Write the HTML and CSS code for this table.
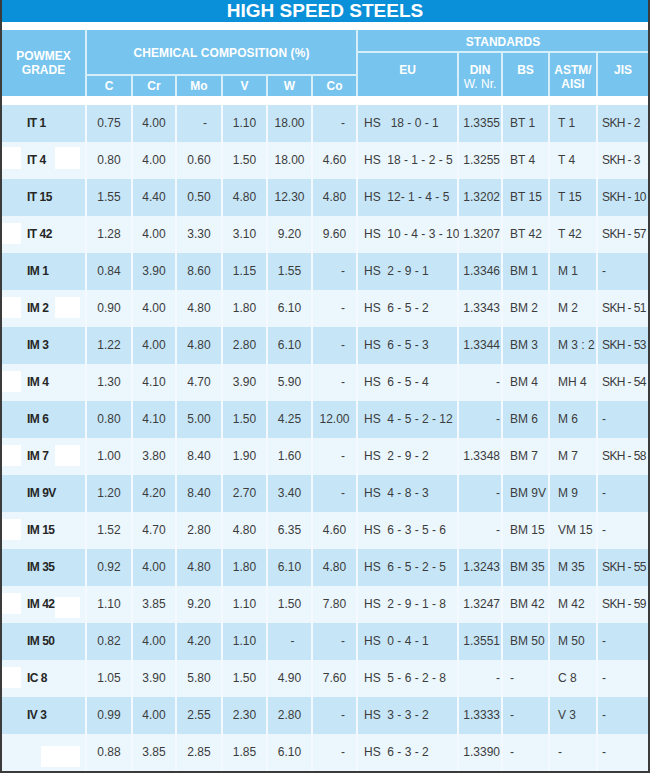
FILE: index.html
```html
<!DOCTYPE html>
<html lang="en">
<head>
<meta charset="utf-8">
<title>High Speed Steels</title>
<link rel="stylesheet" href="styles.css">
</head>
<body>
<div class="sheet">
  <div class="title">HIGH SPEED STEELS</div>
  <div class="head">
    <div class="h grade-h">POWMEX<br>GRADE</div>
    <div class="h chem-h">CHEMICAL COMPOSITION (%)</div>
    <div class="h std-h">STANDARDS</div>
    <div class="h sub c1">C</div>
    <div class="h sub c2">Cr</div>
    <div class="h sub c3">Mo</div>
    <div class="h sub c4">V</div>
    <div class="h sub c5">W</div>
    <div class="h sub c6">Co</div>
    <div class="h std s1">EU</div>
    <div class="h std s2">DIN<br><span class="thin">W. Nr.</span></div>
    <div class="h std s3">BS</div>
    <div class="h std s4">ASTM/<br>AISI</div>
    <div class="h std s5">JIS</div>
  </div>
  <div class="body">
    <div class="row odd"><div class="g">IT 1</div><div class="n">0.75</div><div class="n">4.00</div><div class="n dm">-</div><div class="n">1.10</div><div class="n">18.00</div><div class="n dc">-</div><div class="eu">HS   18 - 0 - 1</div><div class="din">1.3355</div><div class="l">BT 1</div><div class="l a">T 1</div><div class="l j">SKH - 2</div></div>
    <div class="row even"><div class="g">IT 4<span class="box lb b5"></span><span class="box rb b5"></span></div><div class="n">0.80</div><div class="n">4.00</div><div class="n">0.60</div><div class="n">1.50</div><div class="n">18.00</div><div class="n">4.60</div><div class="eu">HS  18 - 1 - 2 - 5</div><div class="din">1.3255</div><div class="l">BT 4</div><div class="l a">T 4</div><div class="l j">SKH - 3</div></div>
    <div class="row odd"><div class="g">IT 15</div><div class="n">1.55</div><div class="n">4.40</div><div class="n">0.50</div><div class="n">4.80</div><div class="n">12.30</div><div class="n">4.80</div><div class="eu">HS  12- 1 - 4 - 5</div><div class="din">1.3202</div><div class="l">BT 15</div><div class="l a">T 15</div><div class="l j">SKH - 10</div></div>
    <div class="row even"><div class="g">IT 42<span class="box lb"></span></div><div class="n">1.28</div><div class="n">4.00</div><div class="n">3.30</div><div class="n">3.10</div><div class="n">9.20</div><div class="n">9.60</div><div class="eu">HS  10 - 4 - 3 - 10</div><div class="din">1.3207</div><div class="l">BT 42</div><div class="l a">T 42</div><div class="l j">SKH - 57</div></div>
    <div class="row odd"><div class="g">IM 1</div><div class="n">0.84</div><div class="n">3.90</div><div class="n">8.60</div><div class="n">1.15</div><div class="n">1.55</div><div class="n dc">-</div><div class="eu">HS  2 - 9 - 1</div><div class="din">1.3346</div><div class="l">BM 1</div><div class="l a">M 1</div><div class="l j">-</div></div>
    <div class="row even"><div class="g">IM 2<span class="box lb"></span><span class="box rb"></span></div><div class="n">0.90</div><div class="n">4.00</div><div class="n">4.80</div><div class="n">1.80</div><div class="n">6.10</div><div class="n dc">-</div><div class="eu">HS  6 - 5 - 2</div><div class="din">1.3343</div><div class="l">BM 2</div><div class="l a">M 2</div><div class="l j">SKH - 51</div></div>
    <div class="row odd"><div class="g">IM 3</div><div class="n">1.22</div><div class="n">4.00</div><div class="n">4.80</div><div class="n">2.80</div><div class="n">6.10</div><div class="n dc">-</div><div class="eu">HS  6 - 5 - 3</div><div class="din">1.3344</div><div class="l">BM 3</div><div class="l a">M 3 : 2</div><div class="l j">SKH - 53</div></div>
    <div class="row even"><div class="g">IM 4<span class="box lb"></span></div><div class="n">1.30</div><div class="n">4.10</div><div class="n">4.70</div><div class="n">3.90</div><div class="n">5.90</div><div class="n dc">-</div><div class="eu">HS  6 - 5 - 4</div><div class="din">-</div><div class="l">BM 4</div><div class="l a">MH 4</div><div class="l j">SKH - 54</div></div>
    <div class="row odd"><div class="g">IM 6</div><div class="n">0.80</div><div class="n">4.10</div><div class="n">5.00</div><div class="n">1.50</div><div class="n">4.25</div><div class="n">12.00</div><div class="eu">HS  4 - 5 - 2 - 12</div><div class="din">-</div><div class="l">BM 6</div><div class="l a">M 6</div><div class="l j">-</div></div>
    <div class="row even"><div class="g">IM 7<span class="box lb"></span><span class="box rb"></span></div><div class="n">1.00</div><div class="n">3.80</div><div class="n">8.40</div><div class="n">1.90</div><div class="n">1.60</div><div class="n dc">-</div><div class="eu">HS  2 - 9 - 2</div><div class="din">1.3348</div><div class="l">BM 7</div><div class="l a">M 7</div><div class="l j">SKH - 58</div></div>
    <div class="row odd"><div class="g">IM 9V</div><div class="n">1.20</div><div class="n">4.20</div><div class="n">8.40</div><div class="n">2.70</div><div class="n">3.40</div><div class="n dc">-</div><div class="eu">HS  4 - 8 - 3</div><div class="din">-</div><div class="l">BM 9V</div><div class="l a">M 9</div><div class="l j">-</div></div>
    <div class="row even"><div class="g">IM 15<span class="box lb"></span></div><div class="n">1.52</div><div class="n">4.70</div><div class="n">2.80</div><div class="n">4.80</div><div class="n">6.35</div><div class="n">4.60</div><div class="eu">HS  6 - 3 - 5 - 6</div><div class="din">-</div><div class="l">BM 15</div><div class="l a">VM 15</div><div class="l j">-</div></div>
    <div class="row odd"><div class="g">IM 35</div><div class="n">0.92</div><div class="n">4.00</div><div class="n">4.80</div><div class="n">1.80</div><div class="n">6.10</div><div class="n">4.80</div><div class="eu">HS  6 - 5 - 2 - 5</div><div class="din">1.3243</div><div class="l">BM 35</div><div class="l a">M 35</div><div class="l j">SKH - 55</div></div>
    <div class="row even"><div class="g">IM 42<span class="box lb"></span><span class="box rb b11"></span></div><div class="n">1.10</div><div class="n">3.85</div><div class="n">9.20</div><div class="n">1.10</div><div class="n">1.50</div><div class="n">7.80</div><div class="eu">HS  2 - 9 - 1 - 8</div><div class="din">1.3247</div><div class="l">BM 42</div><div class="l a">M 42</div><div class="l j">SKH - 59</div></div>
    <div class="row odd"><div class="g">IM 50</div><div class="n">0.82</div><div class="n">4.00</div><div class="n">4.20</div><div class="n">1.10</div><div class="n dw">-</div><div class="n dc">-</div><div class="eu">HS  0 - 4 - 1</div><div class="din">1.3551</div><div class="l">BM 50</div><div class="l a">M 50</div><div class="l j">-</div></div>
    <div class="row even"><div class="g">IC 8<span class="box lb"></span></div><div class="n">1.05</div><div class="n">3.90</div><div class="n">5.80</div><div class="n">1.50</div><div class="n">4.90</div><div class="n">7.60</div><div class="eu">HS  5 - 6 - 2 - 8</div><div class="din">-</div><div class="l">-</div><div class="l a">C 8</div><div class="l j">-</div></div>
    <div class="row odd"><div class="g">IV 3</div><div class="n">0.99</div><div class="n">4.00</div><div class="n">2.55</div><div class="n">2.30</div><div class="n">2.80</div><div class="n dc">-</div><div class="eu">HS  3 - 3 - 2</div><div class="din">1.3333</div><div class="l">-</div><div class="l a">V 3</div><div class="l j">-</div></div>
    <div class="row even"><div class="g"><span class="box wide"></span></div><div class="n">0.88</div><div class="n">3.85</div><div class="n">2.85</div><div class="n">1.85</div><div class="n">6.10</div><div class="n dc">-</div><div class="eu">HS  6 - 3 - 2</div><div class="din">1.3390</div><div class="l">-</div><div class="l a">-</div><div class="l j">-</div></div>
  </div>
</div>
</body>
</html>
```
FILE: styles.css
```css
html, body {
  margin: 0;
  padding: 0;
  background: #ffffff;
}

.sheet {
  width: 650px;
  height: 773px;
  box-sizing: border-box;
  border-left: 2px solid #3b3b3b;
  border-right: 2px solid #3b3b3b;
  border-bottom: 2px solid #3b3b3b;
  background: #ffffff;
  font-family: "Liberation Sans", Arial, sans-serif;
  overflow: hidden;
}

.title {
  height: 22px;
  background: #0a90d8;
  color: #ffffff;
  font-weight: bold;
  font-size: 19px;
  line-height: 22px;
  text-align: center;
}

.head {
  margin-top: 8px;
  height: 66px;
  display: grid;
  grid-template-columns: 83px 44px 42px 44px 43px 43px 43px 99px 42px 45px 46px 50px;
  grid-template-rows: 21px 21px 20px;
  gap: 2px;
  background: #d6edfa;
}

.h {
  background: #77c4ee;
  color: #ffffff;
  font-weight: bold;
  font-size: 12px;
  line-height: 14px;
  text-align: center;
  display: flex;
  flex-direction: column;
  align-items: center;
  justify-content: center;
}

.grade-h {
  grid-column: 1;
  grid-row: 1 / 4;
  display: block;
  padding-top: 19px;
  line-height: 14px;
  box-sizing: border-box;
}

.chem-h {
  grid-column: 2 / 8;
  grid-row: 1 / 3;
  padding-top: 2px;
  letter-spacing: 0.1px;
}

.std-h {
  grid-column: 8 / 13;
  grid-row: 1;
  padding-top: 3px;
}

.sub {
  grid-row: 3;
}

.std {
  grid-row: 2 / 4;
  display: block;
  padding-top: 10px;
  box-sizing: border-box;
}

.thin {
  font-weight: normal;
}

.body {
  margin-top: 9px;
}

.row {
  display: grid;
  grid-template-columns: 83px 44px 42px 44px 43px 43px 43px 99px 42px 45px 46px 50px;
  column-gap: 2px;
  height: 37px;
  background: #f3f9fe;
  font-size: 12px;
  color: #3c3c3c;
}

.row > div {
  line-height: 37px;
  white-space: pre;
}

.odd > div {
  background: #c6e6f8;
}

.even > div {
  background: #ebf6fd;
}

.g {
  position: relative;
  font-weight: bold;
  font-size: 12px;
  letter-spacing: -0.5px;
  color: #262626;
  padding-left: 25px;
}

.n {
  text-align: center;
}

.n.dm {
  padding-left: 12px;
}

.n.dw {
  padding-left: 6px;
}

.n.dc {
  padding-left: 17px;
}

.eu {
  padding-left: 6px;
}

.din {
  text-align: right;
  padding-right: 1px;
}

.l {
  padding-left: 7px;
}

.l.a {
  padding-left: 8px;
}

.l.j {
  padding-left: 4px;
  letter-spacing: -0.6px;
}

.box {
  position: absolute;
  top: 7px;
  height: 21px;
  background: #ffffff;
}

.box.b5 {
  top: 5px;
  height: 22px;
}

.box.b11 {
  top: 11px;
}

.lb {
  left: -2px;
  width: 21px;
}

.rb {
  left: 53px;
  width: 25px;
}

.wide {
  left: 39px;
  width: 39px;
  top: 12px;
  height: 21px;
}
```
